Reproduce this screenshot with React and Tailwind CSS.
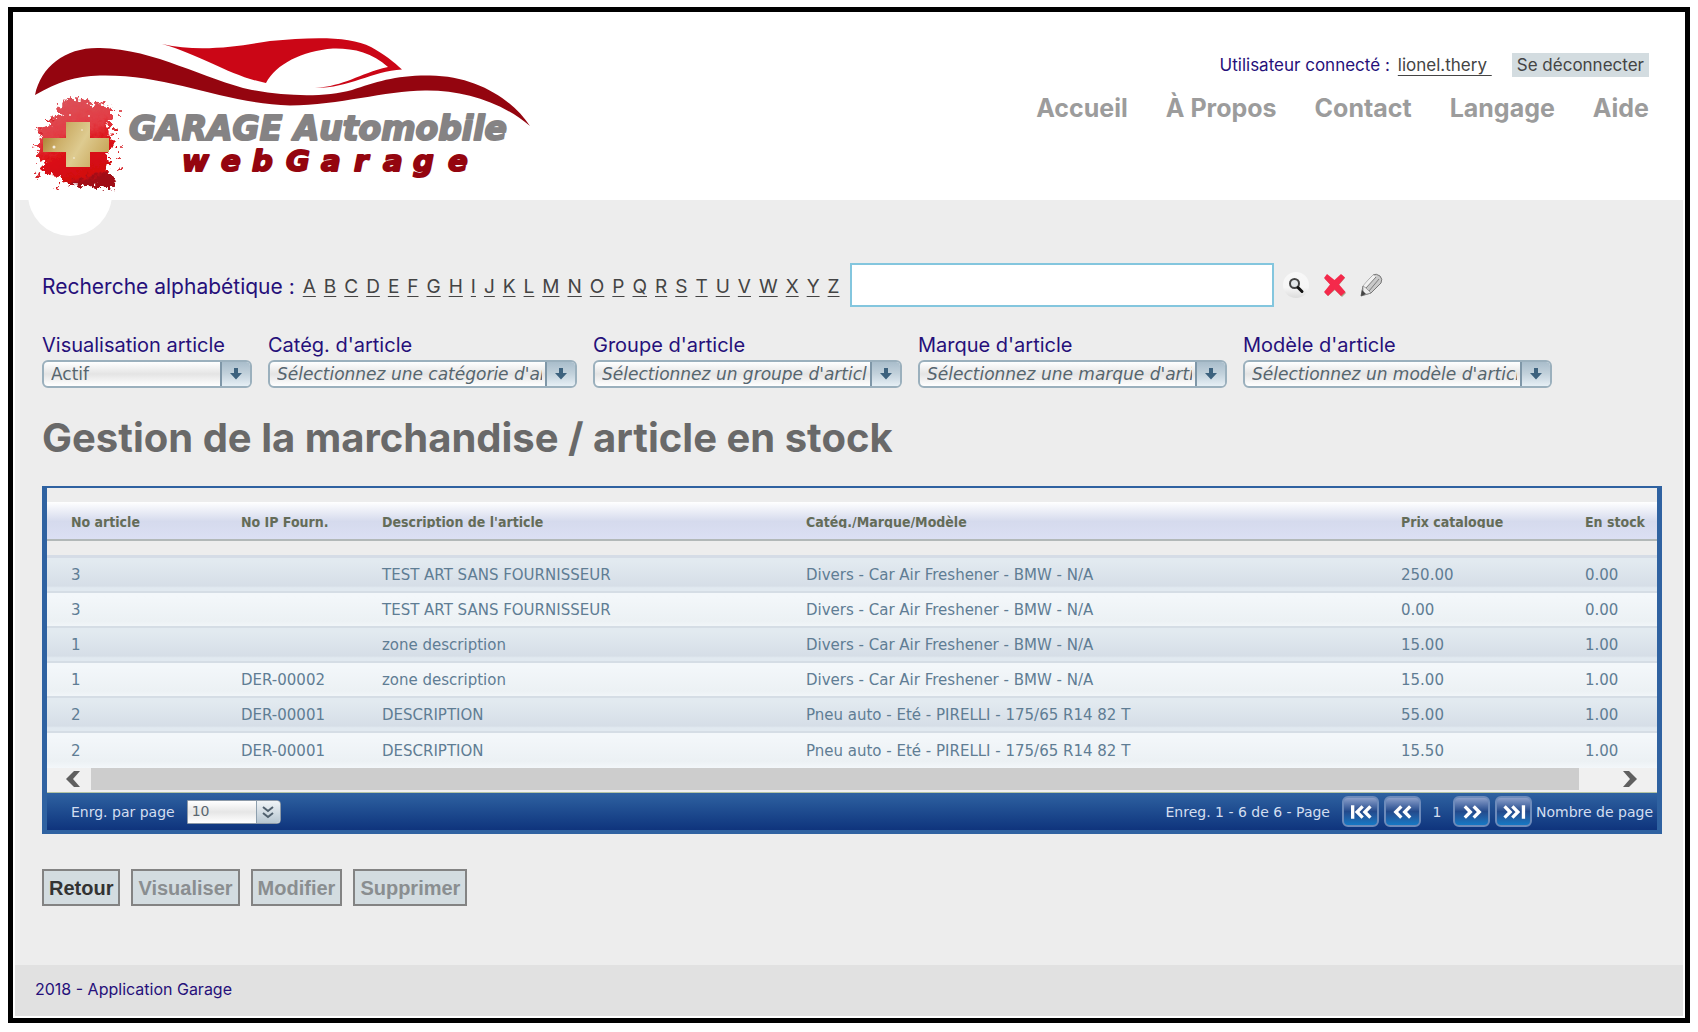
const navItems = ["Accueil", "À Propos", "Contact", "Langage", "Aide"];

const letters = "ABCDEFGHIJKLMNOPQRSTUVWXYZ".split("");

const filters = [
  { id: "visualisation", label: "Visualisation article", value: "Actif", narrow: true },
  { id: "categorie", label: "Catég. d'article", value: "Sélectionnez une catégorie d'article" },
  { id: "groupe", label: "Groupe d'article", value: "Sélectionnez un groupe d'article" },
  { id: "marque", label: "Marque d'article", value: "Sélectionnez une marque d'article" },
  { id: "modele", label: "Modèle d'article", value: "Sélectionnez un modèle d'article" },
];

const columns = [
  { title: "No article", width: "w-[170px]" },
  { title: "No IP Fourn.", width: "w-[141px]" },
  { title: "Description de l'article", width: "w-[424px]" },
  { title: "Catég./Marque/Modèle", width: "" },
  { title: "Prix catalogue", width: "w-[184px]" },
  { title: "En stock", width: "w-[96px]" },
];

const rows = [
  ["3", "", "TEST ART SANS FOURNISSEUR", "Divers - Car Air Freshener - BMW - N/A", "250.00", "0.00"],
  ["3", "", "TEST ART SANS FOURNISSEUR", "Divers - Car Air Freshener - BMW - N/A", "0.00", "0.00"],
  ["1", "", "zone description", "Divers - Car Air Freshener - BMW - N/A", "15.00", "1.00"],
  ["1", "DER-00002", "zone description", "Divers - Car Air Freshener - BMW - N/A", "15.00", "1.00"],
  ["2", "DER-00001", "DESCRIPTION", "Pneu auto - Eté - PIRELLI - 175/65 R14 82 T", "55.00", "1.00"],
  ["2", "DER-00001", "DESCRIPTION", "Pneu auto - Eté - PIRELLI - 175/65 R14 82 T", "15.50", "1.00"],
];

const actions = [
  { label: "Retour", disabled: false },
  { label: "Visualiser", disabled: true },
  { label: "Modifier", disabled: true },
  { label: "Supprimer", disabled: true },
];

const Logo = () => (
  <svg viewBox="32 32 504 164" className="block h-[164px] w-[504px]" role="img" aria-label="GARAGE Automobile webGarage">
    <defs>
      <filter id="splash" x="-20%" y="-20%" width="140%" height="140%">
        <feTurbulence type="fractalNoise" baseFrequency="0.22" numOctaves="3" seed="4" result="noise" />
        <feDisplacementMap in="SourceGraphic" in2="noise" scale="13" xChannelSelector="R" yChannelSelector="G" />
      </filter>
      <linearGradient id="flag" x1="0" y1="0" x2="0.3" y2="1">
        <stop offset="0" stopColor="#a9a3a3" />
        <stop offset="0.14" stopColor="#dc5058" />
        <stop offset="0.45" stopColor="#e23c44" />
        <stop offset="0.65" stopColor="#dc1218" />
        <stop offset="0.94" stopColor="#d20a10" />
        <stop offset="1" stopColor="#a01016" />
      </linearGradient>
      <linearGradient id="gold" x1="0" y1="0.2" x2="1" y2="0.6">
        <stop offset="0" stopColor="#a67c2c" />
        <stop offset="0.3" stopColor="#cdb06a" />
        <stop offset="0.6" stopColor="#decb90" />
        <stop offset="1" stopColor="#c9a85c" />
      </linearGradient>
    </defs>
    <path
      d="M35 95 C41 66 66 47 100 48 C155 49 205 80 252 90 C290 97 326 97 352 90 C376 82 396 75 430 75.5 C476 76 512 99 530 126 C500 101 462 90 425 90.500 C384 91 340 105 290 105.500 C225 104 170 74 100 75.500 C75 76 58 82 35 95 Z"
      fill="#94050f"
    />
    <path
      d="M162 44 C200 53 240 46 270 41 C312 37 350 36 371 47 C384 54 394 62 402 69.500 C372 71 350 88 315 88 C345 86 358 74 388 67 C372 52 352 48 333 48.500 C302 51 276 64 266 83 C230 76 204 56 162 44 Z"
      fill="#cb0616"
    />
    <g filter="url(#splash)">
      <path
        d="M62 101 L72 98 L84 99 L92 105 L100 103 L112 107 L112 118 L108 128 L110 136 L116 143 L110 149 L106 156 L110 163 L106 170 L114 177 L117 188 L109 190 L98 187 L86 186 L72 185 L60 182 L62 176 L48 175 L40 168 L45 163 L36 157 L40 150 L34 146 L42 138 L36 128 L49 126 L52 117 L61 115 L57 108 Z"
        fill="url(#flag)"
      />
      <g fill="#d62028">
        <circle cx="50" cy="120" r="2" />
        <circle cx="116" cy="130" r="2" />
        <circle cx="119" cy="157" r="2" />
        <circle cx="38" cy="175" r="3" />
        <circle cx="122" cy="146" r="1" />
        <circle cx="122" cy="168" r="2" />
        <circle cx="119" cy="113" r="1" />
        <circle cx="58" cy="188" r="2" />
        <circle cx="41" cy="133" r="1" />
        <circle cx="36" cy="164" r="1" />
      </g>
    </g>
    <path d="M66 122 H90 V138 H109 V152 H90 V167 H66 V152 H43 V138 H66 Z" fill="url(#gold)" />
    <g fill="#fff" opacity="0.8">
      <circle cx="54" cy="147" r="1.500" />
      <circle cx="82" cy="130" r="0.800" />
      <circle cx="74" cy="158" r="0.800" />
      <circle cx="89" cy="116" r="1" />
      <circle cx="70" cy="115" r="1" />
    </g>
    <g fontFamily="'DejaVu Sans', sans-serif" fontWeight="700" fontStyle="italic" strokeWidth="2" strokeLinejoin="round">
      <text x="129" y="140" fontSize="33" fill="#858384" stroke="#858384">
        GARAGE Automobile
      </text>
      <text x="182 221 252 286 321 354 383 413 448" y="171" fontSize="29" fill="#94050f" stroke="#94050f">
        webGarage
      </text>
    </g>
  </svg>
);

const SearchIcon = () => (
  <svg viewBox="0 0 28 28" className="size-7">
    <defs>
      <linearGradient id="knob" x1="0" y1="0" x2="0" y2="1">
        <stop offset="0" stopColor="#f8f8f8" />
        <stop offset="0.6" stopColor="#f6f6f6" />
        <stop offset="1" stopColor="#dcdcdc" />
      </linearGradient>
    </defs>
    <circle cx="14" cy="14" r="13" fill="url(#knob)" />
    <circle cx="12.500" cy="12.500" r="4.500" fill="#e4e8ea" stroke="#444" strokeWidth="2" />
    <path d="M16 16.500 L20 20.500" stroke="#111" strokeWidth="3" strokeLinecap="round" />
  </svg>
);

const DeleteIcon = () => (
  <svg viewBox="0 0 24 24" className="size-6">
    <path d="M5 3 L12 9 L19 2 L22 5 L16 12 L23 20 L19 24 L12 17 L5 23 L2 20 L8 12 L2 6 Z" fill="#a9a48a" />
    <path
      d="M4 1 L11.500 7 L18 1 L22 4.500 L16 11.500 L22.500 19 L18 23 L11.500 16.500 L5 23 L1 19 L7 11.500 L1 5 Z"
      fill="#f4294b"
    />
  </svg>
);

const PencilIcon = () => (
  <svg viewBox="0 0 24 24" className="size-6">
    <path d="M1 23 L3 13 L13 2 Q16 0 20 3 Q23 6 21 10 L11 20 Z" fill="#c9c9c9" stroke="#777" strokeWidth="1" />
    <path d="M3 13 L13 2 L16 4 L6 15 Z" fill="#f1f1f1" />
    <path d="M6 15 L16 4 M9 18 L19 6" stroke="#7d7d7d" strokeWidth="1" />
    <path d="M3 13 L6 15 L9 18 L11 20 L3 22 Z" fill="#ececec" stroke="#888" strokeWidth="0.700" />
    <path d="M1 23 L2 17 L6 21 Z" fill="#444" />
  </svg>
);

const FilterSelect = ({ id, label, value, narrow }) => (
  <div className={narrow ? "w-[210px]" : "w-[309px]"}>
    <label htmlFor={id} className="block text-[20px] leading-6 text-[#26107a]">
      {label}
    </label>
    <div className="relative mt-[3px]">
      <select
        id={id}
        className={`block h-7 w-full appearance-none rounded-md border-2 border-[#9bb0bd] bg-linear-to-b from-white via-[#e4e4e4] to-white pl-[7px] pr-[33px] font-['DejaVu_Sans',sans-serif] text-[#56656e] ${
          narrow ? "text-[17px]" : "text-[17px] italic"
        }`}
      >
        <option>{value}</option>
      </select>
      <span className="pointer-events-none absolute inset-y-[2px] right-[2px] flex w-[30px] items-center justify-center rounded-r border-l-2 border-[#7f97a8] bg-linear-to-b from-[#a9bdcb] via-[#c3d2dc] to-[#e6eff5]">
        <svg viewBox="0 0 14 14" className="size-3.5">
          <path d="M5 1 H9 V6 H13 L7 12.500 L1 6 H5 Z" fill="#3d627e" />
        </svg>
      </span>
    </div>
  </div>
);

const pagerPaths = {
  first: "M3 3 V15 M12 4 L7 9 L12 14 M19 4 L14 9 L19 14",
  previous: "M9 4 L4 9 L9 14 M17 4 L12 9 L17 14",
  next: "M4 4 L9 9 L4 14 M12 4 L17 9 L12 14",
  last: "M2 4 L7 9 L2 14 M9 4 L14 9 L9 14 M19 3 V15",
};

const PagerButton = ({ kind, label }) => (
  <button
    type="button"
    aria-label={label}
    className="flex h-[31px] w-[37px] items-center justify-center rounded-md border-2 border-[#6d8bbb] bg-linear-to-b from-[#8b9fca] via-[#234a8c] to-[#1478c4]"
  >
    <svg viewBox="0 0 21 18" className="h-5 w-6">
      <path d={pagerPaths[kind]} fill="none" stroke="white" strokeWidth="3" />
    </svg>
  </button>
);

const Header = () => (
  <header className="relative flex items-start justify-between bg-white pt-5 pr-[34px] pb-1 pl-[17px]">
    <Logo />
    {/* Half disc hanging under the header */}
    <span className="absolute -bottom-9 left-[13px] size-[84px] rounded-full bg-white [clip-path:inset(48px_0_0_0)]" />
    <div className="pt-[21px]">
      <div className="flex items-center justify-end">
        <span className="text-[17px] leading-6 text-[#26107a]">Utilisateur connecté :</span>
        <a href="#profil" className="ml-2 text-[17px] leading-6 whitespace-pre text-[#444] underline underline-offset-4">
          {"lionel.thery "}
        </a>
        <button type="button" className="ml-5 bg-[#d3dce0] px-[5px] text-[17px] leading-6 text-[#444]">
          Se déconnecter
        </button>
      </div>
      <nav className="mt-[15px] flex justify-end gap-[38px]">
        {navItems.map((item) => (
          <a key={item} href="#" className="text-[25px] leading-8 font-bold text-[#9c9c9c]">
            {item}
          </a>
        ))}
      </nav>
    </div>
  </header>
);

const SearchBar = () => (
  <div className="flex items-center">
    <label htmlFor="recherche" className="pt-[3px] text-[21px] leading-7 whitespace-nowrap text-[#26107a]">
      Recherche alphabétique :
    </label>
    <div className="ml-2 flex gap-2 pt-[3px]">
      {letters.map((letter) => (
        <a key={letter} href="#" className="text-[19px] leading-7 text-[#444] underline underline-offset-3">
          {letter}
        </a>
      ))}
    </div>
    <input
      id="recherche"
      type="text"
      className="ml-2.5 h-11 w-[424px] border-2 border-[#83c6de] bg-white px-2 text-[19px] outline-none"
    />
    <div className="ml-2 flex items-center gap-[13px]">
      <button type="button" aria-label="Rechercher">
        <SearchIcon />
      </button>
      <button type="button" aria-label="Effacer">
        <DeleteIcon />
      </button>
      <button type="button" aria-label="Modifier la recherche">
        <PencilIcon />
      </button>
    </div>
  </div>
);

const ArticleGrid = () => (
  <section className="mt-6 mr-[21px] border-x-[5px] border-t-2 border-b-4 border-[#2f62a1] font-['DejaVu_Sans',sans-serif]">
    <table className="mt-3.5 w-full table-fixed border-separate border-spacing-0 text-left">
      <thead>
        <tr className="bg-linear-to-b from-white via-[#d5daed] to-[#dce0f4]">
          {columns.map((col) => (
            <th key={col.title} className={`h-[39px] border-b-2 border-[#b2b8b8] pl-6 ${col.width}`}>
              <span className="block h-3.5 overflow-hidden font-['DejaVu_Sans_Condensed','DejaVu_Sans',sans-serif] text-[14px] leading-4 whitespace-nowrap text-[#646c58]">
                {col.title}
              </span>
            </th>
          ))}
        </tr>
      </thead>
      <tbody>
        <tr aria-hidden="true">
          <td colSpan={6} className="h-[17px] border-b-3 border-[#d5dce6]" />
        </tr>
        {rows.map((row, i) => (
          <tr
            key={i}
            className={
              i % 2 === 0
                ? "bg-linear-to-b from-[#e2eaf0] from-10% via-[#d6dee7] via-80% to-[#e1e9f0] to-85%"
                : "bg-linear-to-b from-[#f3f7fa] from-10% via-[#ecf1f4] via-80% to-[#f3f7fa]"
            }
          >
            {row.map((cell, j) => (
              <td
                key={j}
                className={`h-[35px] pl-6 text-[15px] leading-5 whitespace-nowrap text-[#5f7d94] ${
                  i < rows.length - 1 ? "border-b-2 border-[#d5dde5]" : ""
                }`}
              >
                {cell}
              </td>
            ))}
          </tr>
        ))}
      </tbody>
    </table>

    {/* Horizontal scroll bar */}
    <div className="flex h-6 items-start bg-[#f0f0f0]">
      <button type="button" aria-label="Défiler à gauche" className="flex h-[22px] w-11 items-center justify-center pl-2">
        <svg viewBox="0 0 14 16" className="h-4 w-3.5">
          <path d="M8 0 H14 L7 8 L14 16 H8 L0 8 Z" fill="#5f5f5f" />
        </svg>
      </button>
      <div className="h-[22px] flex-1 bg-[#cdcdcd]" />
      <button type="button" aria-label="Défiler à droite" className="flex h-[22px] w-[78px] items-center justify-end pr-5">
        <svg viewBox="0 0 14 16" className="h-4 w-3.5">
          <path d="M6 0 H0 L7 8 L0 16 H6 L14 8 Z" fill="#5f5f5f" />
        </svg>
      </button>
    </div>

    <div className="flex h-[38px] items-center justify-between border-t border-[#b4c4a4] bg-linear-to-b from-[#2f62a1] to-[#0f347d] pr-1 pl-6 text-[#d3def0]">
      <div className="flex items-center">
        <label htmlFor="parPage" className="text-[14px] leading-5">
          Enrg. par page
        </label>
        <div className="relative ml-3">
          <select
            id="parPage"
            className="block h-6 w-[94px] appearance-none rounded-r border border-[#8d9aa8] bg-linear-to-b from-white via-[#e6e6e6] to-white pl-1 text-[14px] text-[#5a6670]"
          >
            <option>10</option>
          </select>
          <span className="pointer-events-none absolute inset-y-px right-px flex w-6 items-center justify-center rounded-r border-l border-[#8d9fae] bg-linear-to-b from-[#f0f4f7] to-[#b7c6d1]">
            <svg viewBox="0 0 12 14" className="h-3.5 w-3">
              <path d="M1 2 L6 6 L11 2 M1 8 L6 12 L11 8" fill="none" stroke="#50606e" strokeWidth="2" />
            </svg>
          </span>
        </div>
      </div>
      <div className="flex items-center text-[14px] leading-5">
        <span className="mr-3">Enreg. 1 - 6 de 6 - Page</span>
        <div className="flex items-center gap-[5px]">
          <PagerButton kind="first" label="Première page" />
          <PagerButton kind="previous" label="Page précédente" />
          <span className="w-[22px] text-center">1</span>
          <PagerButton kind="next" label="Page suivante" />
          <PagerButton kind="last" label="Dernière page" />
        </div>
        <span className="ml-1">Nombre de page</span>
      </div>
    </div>
  </section>
);

export default function App() {
  return (
    <div className="flex min-h-screen bg-white px-2 pt-[7px] pb-[9px] font-['Inter',sans-serif]">
      <div className="flex min-w-0 flex-1 flex-col border-5 border-black bg-white px-[2px] pb-[2px]">
        <Header />
        <main className="flex-1 bg-[#ededed] pt-[63px] pl-[27px]">
          <SearchBar />
          <div className="mt-[26px] flex gap-4">
            {filters.map((filter) => (
              <FilterSelect key={filter.id} {...filter} />
            ))}
          </div>
          <h1 className="mt-[26px] text-[40px] leading-12 font-bold text-[#696969]">
            Gestion de la marchandise / article en stock
          </h1>
          <ArticleGrid />
          <div className="mt-[35px] flex gap-[11px]">
            {actions.map((action) => (
              <button
                key={action.label}
                type="button"
                disabled={action.disabled}
                className="h-[37px] border-2 border-[#838383] bg-[#d3dce0] px-[5px] font-['Liberation_Sans',sans-serif] text-[20px] leading-6 font-bold text-[#333] disabled:text-[#8a8e90]"
              >
                {action.label}
              </button>
            ))}
          </div>
        </main>
        <footer className="h-[51px] bg-[#e1e1e1] px-5 pt-3 text-[16px] leading-6 text-[#26107a]">
          2018 - Application Garage
        </footer>
      </div>
    </div>
  );
}
